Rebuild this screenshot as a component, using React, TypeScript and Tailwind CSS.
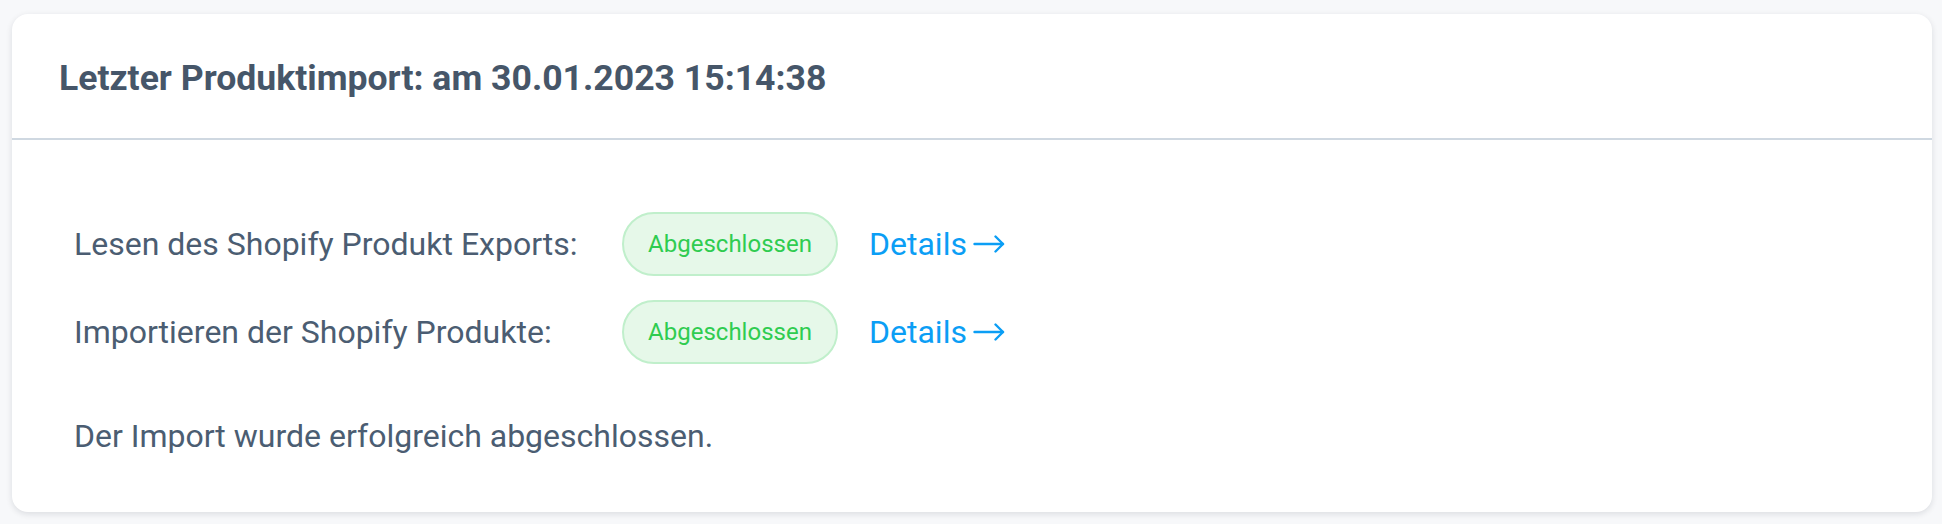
import React from 'react';

const steps = [
  { label: 'Lesen des Shopify Produkt Exports:', status: 'Abgeschlossen' },
  { label: 'Importieren der Shopify Produkte:', status: 'Abgeschlossen' },
];

const ArrowRight = () => (
  <svg width="32" height="18" viewBox="0 0 32 18" fill="none" stroke="currentColor" strokeWidth="2.4" strokeLinecap="round" strokeLinejoin="round">
    <path d="M1.5 9h28.5" />
    <path d="M22.5 1.5L30 9l-7.5 7.5" />
  </svg>
);

export default function App() {
  return (
    <div className="min-h-screen bg-[#f7f8fa] pt-[14px] pl-[12px] pr-[10px] font-['Roboto',sans-serif]">
      <div className="bg-white rounded-[16px] shadow-[0_2px_6px_rgba(15,23,42,0.12)]">
        {/* Header */}
        <div className="h-[126px] flex items-center px-[47px] border-b-2 border-[#cfd8e1]">
          <h2 className="text-[35.6px] font-bold text-[#465669] pt-[5px]">
            Letzter Produktimport: am 30.01.2023 15:14:38
          </h2>
        </div>

        {/* Steps */}
        <div className="px-[62px] pt-[72px] pb-[54px]">
          <div className="flex flex-col gap-[24px]">
            {steps.map((step) => (
              <div key={step.label} className="flex items-center">
                <span className="w-[548px] text-[32px] text-[#4b5d72]">{step.label}</span>
                <span className="h-[64px] w-[216px] flex items-center justify-center rounded-full bg-[#e6f8e9] border-2 border-[#c0efcb] text-[24px] text-[#2fcc50]">
                  {step.status}
                </span>
                <a href="#" className="ml-[31px] flex items-center gap-[6px] text-[32px] text-[#0b9ef5]">
                  Details
                  <ArrowRight />
                </a>
              </div>
            ))}
          </div>
          <p className="mt-[50px] text-[32px] leading-[44px] text-[#4b5d72]">
            Der Import wurde erfolgreich abgeschlossen.
          </p>
        </div>
      </div>
    </div>
  );
}
